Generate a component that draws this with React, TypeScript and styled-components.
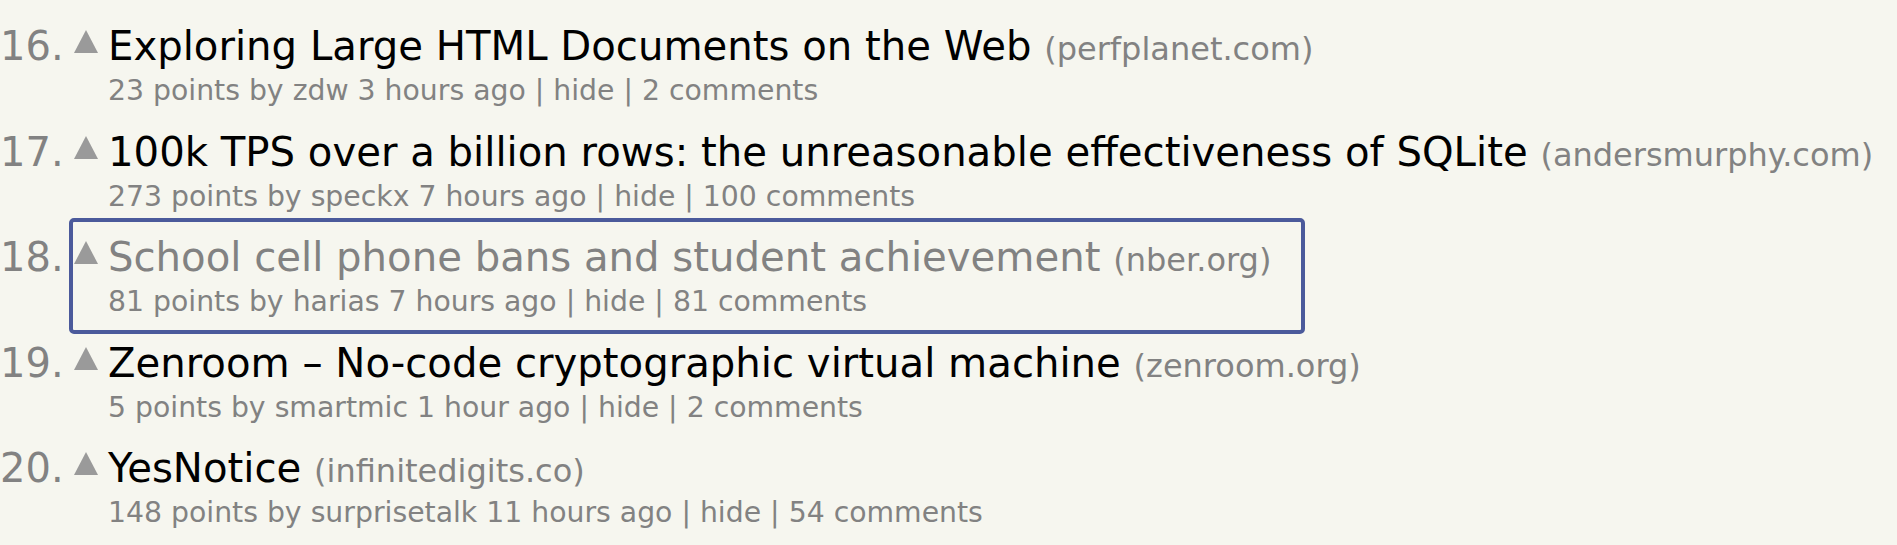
import React from 'react';
import styled, { createGlobalStyle } from 'styled-components';

const GlobalStyle = createGlobalStyle`
  html, body {
    margin: 0;
    padding: 0;
    background: #f6f6ef;
  }
  body {
    font-family: Verdana, "DejaVu Sans", Geneva, sans-serif;
  }
`;

interface Story {
  rank: number;
  title: string;
  site: string;
  points: number;
  user: string;
  age: string;
  comments: number;
  visited?: boolean;
  focused?: boolean;
}

const stories: Story[] = [
  { rank: 16, title: 'Exploring Large HTML Documents on the Web', site: 'perfplanet.com', points: 23, user: 'zdw', age: '3 hours ago', comments: 2 },
  { rank: 17, title: '100k TPS over a billion rows: the unreasonable effectiveness of SQLite', site: 'andersmurphy.com', points: 273, user: 'speckx', age: '7 hours ago', comments: 100 },
  { rank: 18, title: 'School cell phone bans and student achievement', site: 'nber.org', points: 81, user: 'harias', age: '7 hours ago', comments: 81, visited: true, focused: true },
  { rank: 19, title: 'Zenroom – No-code cryptographic virtual machine', site: 'zenroom.org', points: 5, user: 'smartmic', age: '1 hour ago', comments: 2 },
  { rank: 20, title: 'YesNotice', site: 'infinitedigits.co', points: 148, user: 'surprisetalk', age: '11 hours ago', comments: 54 },
];

const List = styled.div`
  display: flex;
  flex-direction: column;
  padding-top: 23px;
`;

const Item = styled.div`
  display: flex;
  align-items: flex-start;
  height: 105.6px;
`;

const Rank = styled.span`
  width: 62px;
  flex: none;
  text-align: right;
  font-size: 40px;
  line-height: 46px;
  color: #828282;
`;

// the focus ring on the highlighted story is drawn over the row
const Body = styled.div<{ $focused?: boolean }>`
  position: relative;
  display: flex;
  align-items: flex-start;
  margin-left: 12px;

  &::after {
    content: '';
    display: ${p => (p.$focused ? 'block' : 'none')};
    position: absolute;
    top: -16px;
    bottom: -10px;
    left: -5px;
    right: -34px;
    border: 4px solid #4b5a9b;
    border-radius: 5px;
    pointer-events: none;
  }
`;

const Vote = styled.svg`
  flex: none;
  width: 24px;
  height: 23px;
  margin-top: 7px;
  margin-right: 10px;
`;

const Text = styled.div`
  display: flex;
  flex-direction: column;
`;

const TitleLine = styled.div<{ $visited?: boolean }>`
  font-size: 40.2px;
  line-height: 46px;
  white-space: nowrap;
  color: ${p => (p.$visited ? '#828282' : '#000000')};
`;

const Site = styled.span`
  font-size: 32px;
  line-height: 32px;
  color: #828282;
`;

const Subtext = styled.div`
  font-size: 28.3px;
  line-height: 44px;
  white-space: nowrap;
  color: #828282;
`;

const UpArrow = () => (
  <Vote viewBox="0 0 24 23">
    <polygon points="12,0 24,23 0,23" fill="#9a9a9a" />
  </Vote>
);

export default function App() {
  return (
    <>
      <GlobalStyle />
      <List>
        {stories.map(s => (
          <Item key={s.rank}>
            <Rank>{s.rank}.</Rank>
            <Body $focused={s.focused}>
              <UpArrow />
              <Text>
                <TitleLine $visited={s.visited}>
                  {s.title} <Site>({s.site})</Site>
                </TitleLine>
                <Subtext>
                  {s.points} points by {s.user} {s.age} | hide | {s.comments} comments
                </Subtext>
              </Text>
            </Body>
          </Item>
        ))}
      </List>
    </>
  );
}
